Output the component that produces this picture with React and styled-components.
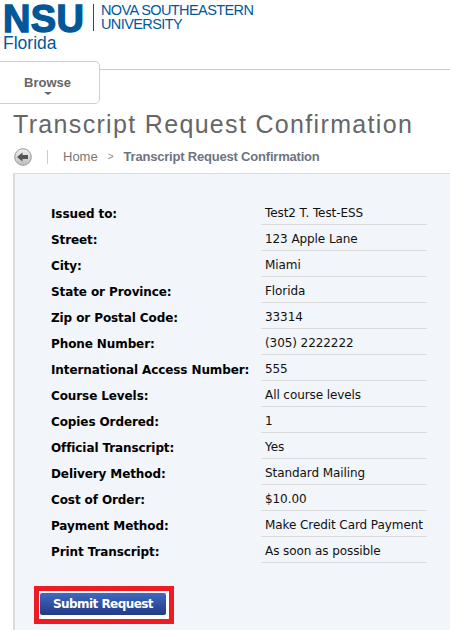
import React from "react";
import styled, { createGlobalStyle } from "styled-components";

const Global = createGlobalStyle`
  html, body { margin: 0; padding: 0; background: #fff; overflow: hidden; }
  body { width: 450px; height: 630px; font-family: "Liberation Sans", Arial, sans-serif; }
`;

const Page = styled.div`
  width: 450px;
  height: 630px;
  overflow: hidden;
  display: flex;
  flex-direction: column;
`;

const Logo = styled.header`
  height: 61px;
  padding-left: 3px;
  display: flex;
  flex-direction: column;
  color: #00589b;
`;

const LogoTop = styled.div`
  display: flex;
  align-items: flex-start;
  height: 35px;
`;

const Mark = styled.div`
  font: 900 38px/28px "Liberation Sans", Arial, sans-serif;
  -webkit-text-stroke: 1.4px #00589b;
  letter-spacing: 0.4px;
  width: 84px;
  height: 28px;
  margin-top: 5px;
  white-space: nowrap;
`;

const LogoRule = styled.div`
  width: 1px;
  height: 27px;
  margin: 4px 7px 0 6px;
  background: #00589b;
`;

const LogoName = styled.div`
  font: 14.5px/13.5px "Liberation Sans", Arial, sans-serif;
  margin-top: 4px;
  letter-spacing: -0.6px;
  white-space: nowrap;
`;

const Campus = styled.div`
  font: 17.5px/16px "Liberation Sans", Arial, sans-serif;
  margin-top: 0;
`;

const NavBar = styled.nav`
  height: 43px;
  position: relative;
  display: flex;
  align-items: flex-start;
  &::before {
    content: "";
    position: absolute;
    left: 0;
    right: 0;
    top: 8px;
    height: 1px;
    background: #ccc;
  }
`;

const BrowseTab = styled.div`
  position: relative;
  width: 101px;
  height: 43px;
  margin-left: -1px;
  background: #fff;
  border: 1px solid #d0d0d0;
  border-radius: 0 5px 5px 0;
  display: flex;
  flex-direction: column;
  align-items: center;
  box-sizing: border-box;
  padding: 13px 4px 0 0;
  color: #666;
  font: bold 13px/15px "Liberation Sans", Arial, sans-serif;
`;

const Caret = styled.span`
  width: 0;
  height: 0;
  margin-top: 2px;
  border-left: 4px solid transparent;
  border-right: 4px solid transparent;
  border-top: 3px solid #666;
`;

const Title = styled.h1`
  margin: 4px 0 0 13px;
  font: 400 25px/32px "Liberation Sans", Arial, sans-serif;
  letter-spacing: 1.33px;
  color: #666;
  white-space: nowrap;
`;

const Crumbs = styled.div`
  display: flex;
  align-items: center;
  height: 26px;
  margin: 4px 0 0 14px;
  font: 13px/18px "Liberation Sans", Arial, sans-serif;
  color: #777;
`;

const BackButton = styled.span`
  width: 18px;
  height: 18px;
  display: flex;
`;

const Divider = styled.span`
  width: 1px;
  height: 14px;
  margin: 0 15px 0 15px;
  background: #ccc;
`;

const Sep = styled.span`
  margin: 0 10px 0 10px;
  font-size: 10px;
  color: #888;
`;

const Current = styled.span`
  font-weight: bold;
  color: #6e7480;
  letter-spacing: -0.2px;
`;

const Panel = styled.main`
  flex: 1;
  margin: 3px 0 0 13px;
  border-top: 1px solid #ddd;
  border-left: 2px solid #ddd;
  background: #f2f5fa;
  padding: 25px 0 0 19px;
`;

const Rows = styled.dl`
  margin: 0 0 0 13px;
  width: 382px;
  display: grid;
  grid-template-columns: 214px 166px;
  grid-auto-rows: 26px;
  font: 12px/15px "DejaVu Sans", Verdana, sans-serif;
`;

const Label = styled.dt`
  margin: 0;
  padding: 8px 0 0 4px;
  font-weight: bold;
  font-size: 12px;
  color: #000;
  white-space: nowrap;
  letter-spacing: -0.1px;
`;

const Value = styled.dd`
  margin: 0;
  padding: 7px 0 0 4px;
  box-sizing: border-box;
  color: #111;
  letter-spacing: -0.08px;
  border-bottom: 1px solid #dadada;
  white-space: nowrap;
`;

const Highlight = styled.div`
  box-sizing: border-box;
  width: 140px;
  height: 38px;
  margin-top: 23px;
  padding: 2px 3px 4px 1px;
  border: 5px solid #ed1c24;
  background: #fff;
  display: flex;
`;

const Submit = styled.button`
  width: 100%;
  height: 100%;
  border: 0;
  border-radius: 2px;
  padding: 0;
  background: linear-gradient(#3f69c0, #223a88);
  color: #fff;
  font: bold 12px/22px "DejaVu Sans", Verdana, sans-serif;
  letter-spacing: -0.55px;
`;

const data = [
  ["Issued to:", "Test2 T. Test-ESS"],
  ["Street:", "123 Apple Lane"],
  ["City:", "Miami"],
  ["State or Province:", "Florida"],
  ["Zip or Postal Code:", "33314"],
  ["Phone Number:", "(305) 2222222"],
  ["International Access Number:", "555"],
  ["Course Levels:", "All course levels"],
  ["Copies Ordered:", "1"],
  ["Official Transcript:", "Yes"],
  ["Delivery Method:", "Standard Mailing"],
  ["Cost of Order:", "$10.00"],
  ["Payment Method:", "Make Credit Card Payment"],
  ["Print Transcript:", "As soon as possible"],
];

export default function App() {
  return (
    <Page>
      <Global />
      <Logo>
        <LogoTop>
          <Mark>NSU</Mark>
          <LogoRule />
          <LogoName>
            NOVA SOUTHEASTERN
            <br />
            UNIVERSITY
          </LogoName>
        </LogoTop>
        <Campus>Florida</Campus>
      </Logo>
      <NavBar>
        <BrowseTab>
          Browse
          <Caret />
        </BrowseTab>
      </NavBar>
      <Title>Transcript Request Confirmation</Title>
      <Crumbs>
        <BackButton>
          <svg width="18" height="18" viewBox="0 0 18 18">
            <defs>
              <linearGradient id="bk" x1="0" y1="0" x2="0" y2="1">
                <stop offset="0" stopColor="#f2f2f2" />
                <stop offset="1" stopColor="#bdbdbd" />
              </linearGradient>
            </defs>
            <circle cx="9" cy="9" r="8.3" fill="url(#bk)" stroke="#999" />
            <path d="M3 9 L8.5 4.5 V7 H14 V11 H8.5 V13.5 Z" fill="#555" />
          </svg>
        </BackButton>
        <Divider />
        <span>Home</span>
        <Sep>&gt;</Sep>
        <Current>Transcript Request Confirmation</Current>
      </Crumbs>
      <Panel>
        <Rows>
          {data.map(([k, v]) => (
            <React.Fragment key={k}>
              <Label>{k}</Label>
              <Value>{v}</Value>
            </React.Fragment>
          ))}
        </Rows>
        <Highlight>
          <Submit>Submit Request</Submit>
        </Highlight>
      </Panel>
    </Page>
  );
}
